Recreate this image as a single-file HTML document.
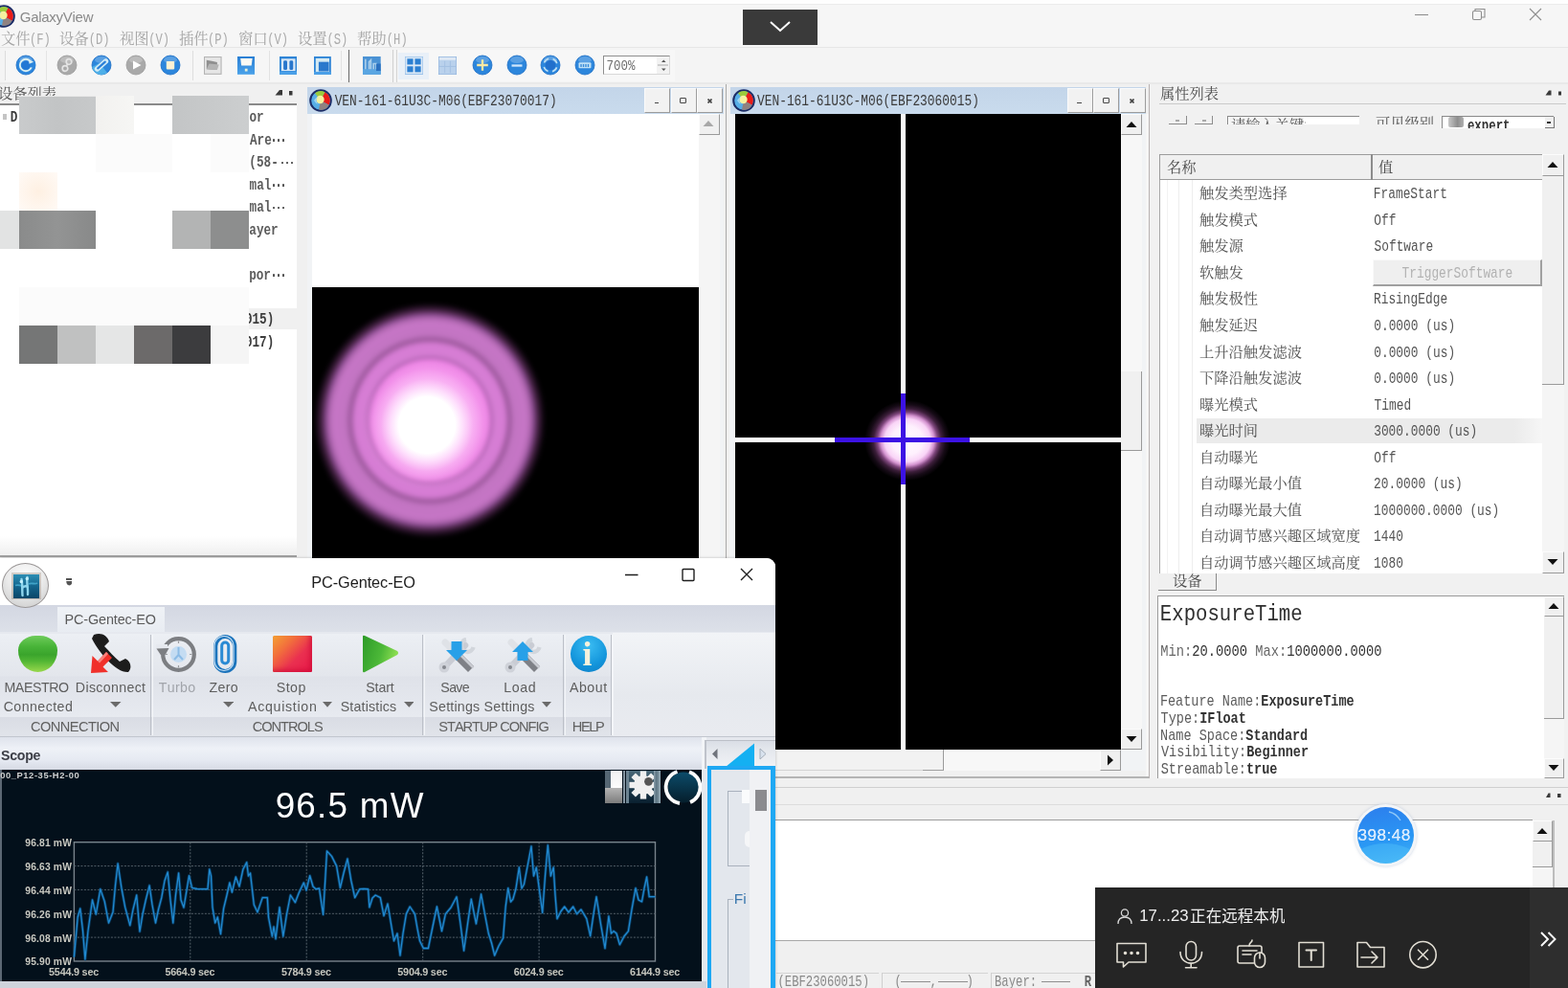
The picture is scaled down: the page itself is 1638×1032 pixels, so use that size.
<!DOCTYPE html>
<html><head><meta charset="utf-8"><title>GalaxyView</title>
<style>
html,body{margin:0;padding:0;}
body{width:1638px;height:1032px;overflow:hidden;position:relative;background:#f0f0f0;font-family:"Liberation Sans",sans-serif;}
div,svg{position:absolute;}
#root{left:0;top:0;width:1638px;height:1032px;overflow:hidden;filter:blur(0.5px);will-change:transform;}
svg text{font-family:"Liberation Serif","Noto Serif CJK SC",serif;font-size:1000px;}
svg text.sans{font-family:"Liberation Sans","Noto Sans CJK SC",sans-serif;}
</style></head><body>
<div id="root">
<div style="left:0px;top:0px;width:1638px;height:50px;background:#f6f6f6;"></div>
<div style="left:0px;top:0px;width:1638px;height:3.5px;background:#fefefe;"></div>
<div style="left:0px;top:3.5px;width:1638px;height:1px;background:#ebebeb;"></div>
<div style="left:0px;top:49px;width:1638px;height:1px;background:#e6e6e6;"></div>
<div style="left:0px;top:50px;width:1638px;height:38px;background:#f4f4f4;"></div>
<div style="left:5px;top:52px;width:196px;height:33px;background:#f6f6f6;"></div>
<div style="left:201px;top:52px;width:162px;height:33px;background:#f6f6f6;"></div>
<div style="left:415px;top:52px;width:290px;height:33px;background:#f7f7f7;"></div>
<div style="left:0px;top:86px;width:1638px;height:2px;background:#e9e9e9;"></div>
<svg style="left:-8px;top:5px" width="24" height="24" viewBox="-12 -12 24 24"><circle r="11.8" fill="#1b2c66"/><circle r="9.8" fill="#58aee6"/><path d="M0 0 L-6 -7.7 A9.8 9.8 0 0 1 4.5 -8.7 Z" fill="#9bcb3c"/><path d="M0 0 L4.5 -8.7 A9.8 9.8 0 0 1 8.6 4.7 Z" fill="#ea1c18"/><path d="M0 0 L8.6 4.7 A9.8 9.8 0 0 1 -2 9.6 Z" fill="#8f8280"/><circle cx="-0.5" cy="-1" r="4.2" fill="#f5f1a0"/><path d="M-3 -3.5 A4.5 4.5 0 0 0 -2 4 A7 7 0 0 1 -7 0 A6 6 0 0 1 -3 -3.500 Z" fill="#9fd4f2"/></svg>
<div style="left:20.75px;top:9.96px;font:15px/1 'Liberation Sans',sans-serif;color:#8a8a8a;white-space:pre;font-kerning:none;letter-spacing:-0.275px;">GalaxyView</div>
<svg width="30.8" height="18.5" viewBox="0 0 2000 1200" fill="#a4a4a4" style="left:0.5px;top:32.3px;opacity:1.0"><text x="0" y="880">文件</text></svg>
<div style="left:30.90px;top:35.97px;font:12.16px/1 'Liberation Mono',monospace;color:#acacac;white-space:pre;transform:scaleY(1.373);transform-origin:0 50%;">(F)</div>
<svg width="30.8" height="18.5" viewBox="0 0 2000 1200" fill="#a4a4a4" style="left:62.3px;top:32.3px;opacity:1.0"><text x="0" y="880">设备</text></svg>
<div style="left:92.70px;top:35.97px;font:12.16px/1 'Liberation Mono',monospace;color:#acacac;white-space:pre;transform:scaleY(1.373);transform-origin:0 50%;">(D)</div>
<svg width="30.8" height="18.5" viewBox="0 0 2000 1200" fill="#a4a4a4" style="left:124.8px;top:32.3px;opacity:1.0"><text x="0" y="880">视图</text></svg>
<div style="left:155.20px;top:35.97px;font:12.16px/1 'Liberation Mono',monospace;color:#acacac;white-space:pre;transform:scaleY(1.373);transform-origin:0 50%;">(V)</div>
<svg width="30.8" height="18.5" viewBox="0 0 2000 1200" fill="#a4a4a4" style="left:186.6px;top:32.3px;opacity:1.0"><text x="0" y="880">插件</text></svg>
<div style="left:217.00px;top:35.97px;font:12.16px/1 'Liberation Mono',monospace;color:#acacac;white-space:pre;transform:scaleY(1.373);transform-origin:0 50%;">(P)</div>
<svg width="30.8" height="18.5" viewBox="0 0 2000 1200" fill="#a4a4a4" style="left:248.8px;top:32.3px;opacity:1.0"><text x="0" y="880">窗口</text></svg>
<div style="left:279.20px;top:35.97px;font:12.16px/1 'Liberation Mono',monospace;color:#acacac;white-space:pre;transform:scaleY(1.373);transform-origin:0 50%;">(V)</div>
<svg width="30.8" height="18.5" viewBox="0 0 2000 1200" fill="#a4a4a4" style="left:311.0px;top:32.3px;opacity:1.0"><text x="0" y="880">设置</text></svg>
<div style="left:341.40px;top:35.97px;font:12.16px/1 'Liberation Mono',monospace;color:#acacac;white-space:pre;transform:scaleY(1.373);transform-origin:0 50%;">(S)</div>
<svg width="30.8" height="18.5" viewBox="0 0 2000 1200" fill="#a4a4a4" style="left:373.4px;top:32.3px;opacity:1.0"><text x="0" y="880">帮助</text></svg>
<div style="left:403.80px;top:35.97px;font:12.16px/1 'Liberation Mono',monospace;color:#acacac;white-space:pre;transform:scaleY(1.373);transform-origin:0 50%;">(H)</div>
<div style="left:776px;top:10px;width:78px;height:37px;background:#3a3a3a;"></div>
<svg style="left:803px;top:21px" width="24" height="14" viewBox="0 0 24 14" fill="none" stroke="#fff" stroke-width="2"><path d="M2 2 L12 11 L22 2"/></svg>
<svg style="left:1470px;top:4px" width="150" height="24" viewBox="0 0 150 24" fill="none" stroke="#8e8e8e" stroke-width="1.1"><path d="M8 11.5 H22"/><rect x="68.5" y="7.5" width="9" height="9" rx="1.5"/><path d="M71 7 V5.5 H81 V14 H78"/><path d="M128 5 L140 17 M140 5 L128 17"/></svg>
<svg style="left:16px;top:57px" width="22" height="22" viewBox="-11 -11 22 22"><circle r="10" fill="#2c86dc" stroke="#1b6cc4" stroke-width="0.8"/><ellipse cx="0" cy="-5.5" rx="7" ry="3.6" fill="#fff" opacity=".22"/><circle r="6.2" fill="none" stroke="#dcf0f2" stroke-width="1.9"/><path d="M3 -3 L10 -3 L10 3 L3 2 Z" fill="#2c86dc"/><circle r="4.6" fill="#2278d4"/><path d="M3 -6 L8.2 -3.2 L3.500 -1.200 Z" fill="#dcf0f2"/></svg>
<svg style="left:59px;top:57px" width="22" height="22" viewBox="-11 -11 22 22"><circle r="10" fill="#a9a9a9" stroke="#9a9a9a" stroke-width="0.8"/><ellipse cx="0" cy="-5.5" rx="7" ry="3.6" fill="#fff" opacity=".22"/><circle cx="-2" cy="3.500" r="2.800" fill="none" stroke="#e4e4e4" stroke-width="1.7"/><circle cx="2" cy="-3.500" r="2.800" fill="none" stroke="#e4e4e4" stroke-width="1.7"/><path d="M-1 1.500 L1 -1.500" stroke="#e4e4e4" stroke-width="1.6"/></svg>
<svg style="left:95.4px;top:57px" width="22" height="22" viewBox="-11 -11 22 22"><circle r="10" fill="#2c86dc" stroke="#1b6cc4" stroke-width="0.8"/><ellipse cx="0" cy="-5.5" rx="7" ry="3.6" fill="#fff" opacity=".22"/><path d="M-10 2 A10 10 0 0 0 6 8 L-2 -2 Z" fill="#5cc0ec" opacity=".7"/><path d="M-4.500 4 L4.500 -4" stroke="#d4ecf6" stroke-width="5.4" stroke-linecap="round"/><path d="M-3.800 3.300 L3.800 -3.300" stroke="#2c80d8" stroke-width="2.2" stroke-linecap="round"/></svg>
<svg style="left:131px;top:57px" width="22" height="22" viewBox="-11 -11 22 22"><circle r="10" fill="#a9a9a9" stroke="#9a9a9a" stroke-width="0.8"/><ellipse cx="0" cy="-5.5" rx="7" ry="3.6" fill="#fff" opacity=".22"/><path d="M-3 -4.5 L5.5 0 L-3 4.5 Z" fill="#fff"/></svg>
<svg style="left:167.3px;top:57px" width="22" height="22" viewBox="-11 -11 22 22"><circle r="10" fill="#2c86dc" stroke="#1b6cc4" stroke-width="0.8"/><ellipse cx="0" cy="-5.5" rx="7" ry="3.6" fill="#fff" opacity=".22"/><rect x="-4.2" y="-4" width="8.4" height="8.4" rx="0.8" fill="#fdf1d4"/></svg>
<svg style="left:492.7px;top:57.3px" width="22" height="22" viewBox="-11 -11 22 22"><circle r="10" fill="#2c86dc" stroke="#1b6cc4" stroke-width="0.8"/><ellipse cx="0" cy="-5.5" rx="7" ry="3.6" fill="#fff" opacity=".22"/><path d="M-5.8 0 H5.8 M0 -5.800 V5.800" stroke="#fbe9a4" stroke-width="2.3"/></svg>
<svg style="left:528.5px;top:57.3px" width="22" height="22" viewBox="-11 -11 22 22"><circle r="10" fill="#2c86dc" stroke="#1b6cc4" stroke-width="0.8"/><ellipse cx="0" cy="-5.5" rx="7" ry="3.6" fill="#fff" opacity=".22"/><path d="M-5.5 0.500 H5.5" stroke="#cfe6fb" stroke-width="2.3"/></svg>
<svg style="left:564.4px;top:57.3px" width="22" height="22" viewBox="-11 -11 22 22"><circle r="10" fill="#2c86dc" stroke="#1b6cc4" stroke-width="0.8"/><ellipse cx="0" cy="-5.5" rx="7" ry="3.6" fill="#fff" opacity=".22"/><circle r="7" fill="none" stroke="#bfe0f4" stroke-width="1.600" stroke-dasharray="6.5 4.500" transform="rotate(20)"/><circle r="5.300" fill="#2270cc"/></svg>
<svg style="left:600.3px;top:57.3px" width="22" height="22" viewBox="-11 -11 22 22"><circle r="10" fill="#2c86dc" stroke="#1b6cc4" stroke-width="0.8"/><ellipse cx="0" cy="-5.5" rx="7" ry="3.6" fill="#fff" opacity=".22"/><rect x="-6.5" y="-2.800" width="13" height="6" rx="1" fill="#bfe0f6"/><path d="M-4 -1 V2 M-1.500 -1 V2 M1 -1 V2 M3.500 -1 V2" stroke="#3a8ad8" stroke-width="1.400"/></svg>
<svg style="left:213px;top:59px" width="18.5" height="18.8" viewBox="0 0 20 20" preserveAspectRatio="none"><rect x="0.500" y="0.500" width="19" height="19" fill="#e6e6e6" stroke="#b4b4b4" stroke-width="1.200"/><path d="M3 4 L9 5 L15 6.500 V15 L3 14 Z" fill="#8f8f8f"/><path d="M3 14 L6 8 L17 9 L15 15 Z" fill="#b4b4b4"/></svg>
<svg style="left:248px;top:59px" width="18.4" height="18.8" viewBox="0 0 20 20" preserveAspectRatio="none"><defs><linearGradient id="gsv" x1="0" y1="0" x2="0" y2="1"><stop offset="0" stop-color="#2a7fd4"/><stop offset="1" stop-color="#4aa2ea"/></linearGradient></defs><rect width="20" height="20" fill="url(#gsv)"/><path d="M3.500 2 H17 L16 10 H4.500 Z" fill="#fbfaf4"/><rect x="8.500" y="13.500" width="3" height="3" fill="#e8f0d8"/></svg>
<svg style="left:292px;top:59px" width="18.4" height="18.8" viewBox="0 0 20 20" preserveAspectRatio="none"><rect width="20" height="20" fill="#2e84d6"/><rect x="2" y="2.500" width="16" height="13.500" fill="#d9e8f6"/><rect x="4.500" y="4.500" width="4.200" height="10.500" rx="1.500" fill="#2876cc"/><rect x="11.300" y="4.500" width="4.200" height="10.500" rx="1.500" fill="#2876cc"/><rect x="0" y="16.500" width="20" height="3.500" fill="#4aa0e8"/></svg>
<svg style="left:328px;top:59px" width="17.8" height="18.8" viewBox="0 0 20 20" preserveAspectRatio="none"><rect width="20" height="20" fill="#2e84d6"/><rect x="2" y="2" width="16" height="15" fill="#d6eaf2"/><rect x="5.500" y="6" width="12" height="10.500" fill="#2a78cc"/><rect x="0" y="17" width="20" height="3" fill="#4aa0e8"/></svg>
<svg style="left:379px;top:59px" width="18.7" height="18.8" viewBox="0 0 20 20" preserveAspectRatio="none"><rect width="20" height="20" fill="#4a92d4"/><rect x="0" y="14" width="20" height="6" fill="#5aa6e2"/><path d="M3 14 V3 M7 14 V6 L9 4 V14 M12 14 V8 H15 V14" stroke="#a8cdea" stroke-width="1.800" fill="none"/><rect x="15" y="8" width="5" height="8" fill="#2a70c0"/></svg>
<div style="left:416px;top:55px;width:32px;height:28px;background:#e9f0f8;"></div>
<svg style="left:423px;top:59.3px" width="19" height="18.7" viewBox="0 0 20 20" preserveAspectRatio="none"><rect width="20" height="20" fill="#dce9f6" stroke="#9cc2ea" stroke-width="1.500"/><rect x="2.500" y="2.500" width="6.500" height="6.500" fill="#2b7fd2"/><rect x="11" y="2.500" width="6.500" height="6.500" fill="#2b7fd2"/><rect x="2.500" y="11" width="6.500" height="6.500" fill="#2b7fd2"/><rect x="11" y="11" width="6.500" height="6.500" fill="#2b7fd2"/></svg>
<svg style="left:458.4px;top:59px" width="19" height="19" viewBox="0 0 20 20" preserveAspectRatio="none"><rect width="20" height="20" fill="#b9d1ec" stroke="#8fb2dc" stroke-width="1.200"/><rect x="1" y="1" width="18" height="3" fill="#dfe9f4"/><path d="M7 5 V18 M13 5 V18 M1 11 H19" stroke="#a3c0e2" stroke-width="1"/></svg>
<div style="left:48px;top:53px;width:1px;height:31px;background:#e4e4e4;"></div>
<div style="left:201px;top:53px;width:1px;height:31px;background:#dedede;"></div>
<div style="left:280.5px;top:53px;width:1px;height:31px;background:#e2e2e2;"></div>
<div style="left:355.8px;top:53px;width:1px;height:31px;background:#e2e2e2;"></div>
<div style="left:5px;top:53px;width:1px;height:31px;background:#dcdcdc;"></div>
<div style="left:363.5px;top:52px;width:1.5px;height:34px;background:#6a6a6a;"></div>
<div style="left:410px;top:52px;width:1px;height:34px;background:#d0d0d0;"></div>
<div style="left:414px;top:52px;width:1px;height:34px;background:#d4d4d4;"></div>
<div style="left:630px;top:58px;width:70px;height:20px;background:#fff;border:1px solid #8e8e8e;border-right-color:#d8d8d8;border-bottom-color:#d8d8d8;box-sizing:border-box;"></div>
<div style="left:633.54px;top:64.14px;font:12.50px/1 'Liberation Mono',monospace;color:#6e6e6e;white-space:pre;transform:scaleY(1.130);transform-origin:0 50%;">700%</div>
<div style="left:686px;top:59px;width:13px;height:18px;background:#f2f2f2;"></div>
<svg style="left:686px;top:59px" width="13" height="18" viewBox="0 0 13 18" fill="#555"><path d="M5 6 L7.300 3.500 L9.600 6 Z M5 12.500 L7.300 15 L9.600 12.500 Z"/><path d="M1 9 H12" stroke="#aaa" stroke-width="1"/></svg>
<div style="left:0px;top:88px;width:311px;height:21px;background:#f0f0f0;"></div>
<svg width="61.2" height="18.4" viewBox="0 0 4000 1200" fill="#555" style="left:-2.0px;top:90.0px;opacity:1.0"><text x="0" y="880">设备列表</text></svg>
<div style="left:0px;top:108px;width:311px;height:2px;background:#8a8a8a;"></div>
<div style="left:0px;top:110px;width:310px;height:468px;background:#fff;"></div>
<div style="left:310px;top:88px;width:11px;height:495px;background:#f0f0f0;"></div>
<div style="left:0px;top:560px;width:310px;height:19.5px;background:linear-gradient(#fff,#efefef);"></div>
<div style="left:0px;top:579.5px;width:310px;height:2px;background:#a0a0a0;"></div>
<svg style="left:285px;top:91px" width="24" height="12" viewBox="0 0 24 12" fill="#3a3a3a"><path d="M2.500 8.500 L7 3 L10 3 L10 8.500 Z"/><rect x="17" y="4" width="3.500" height="4.500"/></svg>
<div style="left:260.43px;top:117.38px;font:bold 12.66px/1 'Liberation Mono',monospace;color:#5c5c5c;white-space:pre;transform:scaleY(1.259);transform-origin:0 50%;">or</div>
<div style="left:261.00px;top:140.88px;font:bold 12.66px/1 'Liberation Mono',monospace;color:#5c5c5c;white-space:pre;transform:scaleY(1.259);transform-origin:0 50%;">Are</div>
<div style="left:285.0px;top:145.39999999999998px;width:2.4px;height:2.4px;background:#555;border-radius:0.600px"></div>
<div style="left:289.8px;top:145.39999999999998px;width:2.4px;height:2.4px;background:#555;border-radius:0.600px"></div>
<div style="left:294.6px;top:145.39999999999998px;width:2.4px;height:2.4px;background:#555;border-radius:0.600px"></div>
<div style="left:260.37px;top:164.38px;font:bold 12.66px/1 'Liberation Mono',monospace;color:#5c5c5c;white-space:pre;transform:scaleY(1.259);transform-origin:0 50%;">(58-</div>
<div style="left:294.09999999999997px;top:168.89999999999998px;width:2.4px;height:2.4px;background:#555;border-radius:0.600px"></div>
<div style="left:298.9px;top:168.89999999999998px;width:2.4px;height:2.4px;background:#555;border-radius:0.600px"></div>
<div style="left:303.7px;top:168.89999999999998px;width:2.4px;height:2.4px;background:#555;border-radius:0.600px"></div>
<div style="left:260.57px;top:187.88px;font:bold 12.66px/1 'Liberation Mono',monospace;color:#5c5c5c;white-space:pre;transform:scaleY(1.259);transform-origin:0 50%;">mal</div>
<div style="left:285.0px;top:192.39999999999998px;width:2.4px;height:2.4px;background:#555;border-radius:0.600px"></div>
<div style="left:289.8px;top:192.39999999999998px;width:2.4px;height:2.4px;background:#555;border-radius:0.600px"></div>
<div style="left:294.6px;top:192.39999999999998px;width:2.4px;height:2.4px;background:#555;border-radius:0.600px"></div>
<div style="left:260.57px;top:211.38px;font:bold 12.66px/1 'Liberation Mono',monospace;color:#5c5c5c;white-space:pre;transform:scaleY(1.259);transform-origin:0 50%;">mal</div>
<div style="left:285.0px;top:215.89999999999998px;width:2.4px;height:2.4px;background:#555;border-radius:0.600px"></div>
<div style="left:289.8px;top:215.89999999999998px;width:2.4px;height:2.4px;background:#555;border-radius:0.600px"></div>
<div style="left:294.6px;top:215.89999999999998px;width:2.4px;height:2.4px;background:#555;border-radius:0.600px"></div>
<div style="left:260.34px;top:234.88px;font:bold 12.66px/1 'Liberation Mono',monospace;color:#5c5c5c;white-space:pre;transform:scaleY(1.259);transform-origin:0 50%;">ayer</div>
<div style="left:260.13px;top:281.88px;font:bold 12.66px/1 'Liberation Mono',monospace;color:#5c5c5c;white-space:pre;transform:scaleY(1.259);transform-origin:0 50%;">por</div>
<div style="left:285.0px;top:286.4px;width:2.4px;height:2.4px;background:#555;border-radius:0.600px"></div>
<div style="left:289.8px;top:286.4px;width:2.4px;height:2.4px;background:#555;border-radius:0.600px"></div>
<div style="left:294.6px;top:286.4px;width:2.4px;height:2.4px;background:#555;border-radius:0.600px"></div>
<div style="left:3px;top:119px;width:4px;height:6px;background:#c4c4c4;"></div>
<div style="left:10.67px;top:116.88px;font:bold 12.66px/1 'Liberation Mono',monospace;color:#3c3c3c;white-space:pre;transform:scaleY(1.259);transform-origin:0 50%;">D</div>
<div style="left:256px;top:322px;width:54px;height:22px;background:#f0f0f0;"></div>
<div style="left:255.88px;top:328.28px;font:bold 12.66px/1 'Liberation Mono',monospace;color:#3c3c3c;white-space:pre;transform:scaleY(1.259);transform-origin:0 50%;">015)</div>
<div style="left:255.88px;top:351.58px;font:bold 12.66px/1 'Liberation Mono',monospace;color:#3c3c3c;white-space:pre;transform:scaleY(1.259);transform-origin:0 50%;">017)</div>
<div style="left:100px;top:100px;width:40px;height:40px;background:linear-gradient(90deg,#f2f1ef,#f6f6f4);"></div>
<div style="left:20px;top:100px;width:80px;height:40px;background:linear-gradient(90deg,#c9cbcc,#c2c4c5 50%,#c7c9ca);"></div>
<div style="left:180px;top:100px;width:80px;height:40px;background:linear-gradient(90deg,#c3c5c6,#cccecf);"></div>
<div style="left:0px;top:220px;width:20px;height:40px;background:#e2e3e3;"></div>
<div style="left:20px;top:220px;width:80px;height:40px;background:linear-gradient(90deg,#8a8b8b,#939494 50%,#888989);"></div>
<div style="left:180px;top:220px;width:40px;height:40px;background:#b3b4b4;"></div>
<div style="left:220px;top:220px;width:40px;height:40px;background:#8d8e8e;"></div>
<div style="left:20px;top:180px;width:40px;height:40px;background:radial-gradient(#fef0e2,#fffaf6);"></div>
<div style="left:20px;top:340px;width:40px;height:40px;background:#757676;"></div>
<div style="left:60px;top:340px;width:40px;height:40px;background:#c0c1c1;"></div>
<div style="left:100px;top:340px;width:40px;height:40px;background:#e5e6e6;"></div>
<div style="left:140px;top:340px;width:40px;height:40px;background:#6c6a6a;"></div>
<div style="left:180px;top:340px;width:40px;height:40px;background:#3c3c3e;"></div>
<div style="left:220px;top:340px;width:40px;height:40px;background:#f5f5f5;"></div>
<div style="left:250px;top:322px;width:10px;height:18px;background:#fbfbfb;"></div>
<div style="left:100px;top:140px;width:80px;height:40px;background:#fbfbfb;"></div>
<div style="left:220px;top:140px;width:40px;height:40px;background:#fbfbfb;"></div>
<div style="left:20px;top:300px;width:200px;height:40px;background:#fbfbfb;"></div>
<div style="left:220px;top:300px;width:40px;height:40px;background:#fbfbfb;"></div>
<div style="left:20px;top:100px;width:80px;height:0.8px;background:#e8e8e8;"></div>
<div style="left:321px;top:88px;width:879px;height:735px;background:#f0f0f0;"></div>
<div style="left:321px;top:91px;width:435px;height:28px;background:linear-gradient(#c3d5e9,#c9dbed);"></div>
<svg style="left:322.7px;top:92.8px" width="24" height="24" viewBox="-12 -12 24 24"><circle r="11.8" fill="#1b2c66"/><circle r="9.8" fill="#58aee6"/><path d="M0 0 L-6 -7.7 A9.8 9.8 0 0 1 4.5 -8.7 Z" fill="#9bcb3c"/><path d="M0 0 L4.5 -8.7 A9.8 9.8 0 0 1 8.6 4.7 Z" fill="#ea1c18"/><path d="M0 0 L8.6 4.7 A9.8 9.8 0 0 1 -2 9.6 Z" fill="#8f8280"/><circle cx="-0.5" cy="-1" r="4.2" fill="#f5f1a0"/><path d="M-3 -3.5 A4.5 4.5 0 0 0 -2 4 A7 7 0 0 1 -7 0 A6 6 0 0 1 -3 -3.500 Z" fill="#9fd4f2"/></svg>
<div style="left:349.64px;top:99.89px;font:12.90px/1 'Liberation Mono',monospace;color:#3c3c3c;white-space:pre;transform:scaleY(1.271);transform-origin:0 50%;">VEN-161-61U3C-M06(EBF23070017)</div>
<div style="left:673.2px;top:92px;width:27px;height:25.5px;background:#f2f2f2;border:1px solid #fbfbfb;border-right:1.500px solid #9c9c9c;border-bottom:1.500px solid #9c9c9c;box-sizing:border-box;"></div>
<div style="left:683.7px;top:106.5px;width:4.5px;height:1.8px;background:#484848;"></div>
<div style="left:700.7px;top:92px;width:27px;height:25.5px;background:#f2f2f2;border:1px solid #fbfbfb;border-right:1.500px solid #9c9c9c;border-bottom:1.500px solid #9c9c9c;box-sizing:border-box;"></div>
<div style="left:710.2px;top:101.5px;width:7px;height:6.3px;border:1.300px solid #484848;border-top-width:1.800px;box-sizing:border-box;border-radius:1px"></div>
<div style="left:728.2px;top:92px;width:27px;height:25.5px;background:#f2f2f2;border:1px solid #fbfbfb;border-right:1.500px solid #9c9c9c;border-bottom:1.500px solid #9c9c9c;box-sizing:border-box;"></div>
<svg style="left:738.7px;top:102.5px" width="5" height="5" viewBox="0 0 5 5" stroke="#484848" stroke-width="1.700"><path d="M0.500 0.500 L4.500 4.500 M4.500 0.500 L0.500 4.500"/></svg>
<div style="left:763px;top:91px;width:433.5px;height:28px;background:linear-gradient(#c3d5e9,#c9dbed);"></div>
<svg style="left:764.7px;top:92.8px" width="24" height="24" viewBox="-12 -12 24 24"><circle r="11.8" fill="#1b2c66"/><circle r="9.8" fill="#58aee6"/><path d="M0 0 L-6 -7.7 A9.8 9.8 0 0 1 4.5 -8.7 Z" fill="#9bcb3c"/><path d="M0 0 L4.5 -8.7 A9.8 9.8 0 0 1 8.6 4.7 Z" fill="#ea1c18"/><path d="M0 0 L8.6 4.7 A9.8 9.8 0 0 1 -2 9.6 Z" fill="#8f8280"/><circle cx="-0.5" cy="-1" r="4.2" fill="#f5f1a0"/><path d="M-3 -3.5 A4.5 4.5 0 0 0 -2 4 A7 7 0 0 1 -7 0 A6 6 0 0 1 -3 -3.500 Z" fill="#9fd4f2"/></svg>
<div style="left:790.94px;top:99.89px;font:12.90px/1 'Liberation Mono',monospace;color:#3c3c3c;white-space:pre;transform:scaleY(1.271);transform-origin:0 50%;">VEN-161-61U3C-M06(EBF23060015)</div>
<div style="left:1114.5px;top:92px;width:27px;height:25.5px;background:#f2f2f2;border:1px solid #fbfbfb;border-right:1.500px solid #9c9c9c;border-bottom:1.500px solid #9c9c9c;box-sizing:border-box;"></div>
<div style="left:1125.0px;top:106.5px;width:4.5px;height:1.8px;background:#484848;"></div>
<div style="left:1142.0px;top:92px;width:27px;height:25.5px;background:#f2f2f2;border:1px solid #fbfbfb;border-right:1.500px solid #9c9c9c;border-bottom:1.500px solid #9c9c9c;box-sizing:border-box;"></div>
<div style="left:1151.5px;top:101.5px;width:7px;height:6.3px;border:1.300px solid #484848;border-top-width:1.800px;box-sizing:border-box;border-radius:1px"></div>
<div style="left:1169.5px;top:92px;width:27px;height:25.5px;background:#f2f2f2;border:1px solid #fbfbfb;border-right:1.500px solid #9c9c9c;border-bottom:1.500px solid #9c9c9c;box-sizing:border-box;"></div>
<svg style="left:1180.0px;top:102.5px" width="5" height="5" viewBox="0 0 5 5" stroke="#484848" stroke-width="1.700"><path d="M0.500 0.500 L4.500 4.500 M4.500 0.500 L0.500 4.500"/></svg>
<div style="left:321px;top:119px;width:435px;height:464px;background:#f1f3f5;"></div>
<div style="left:326px;top:119px;width:404px;height:182px;background:#fff;"></div>
<div style="left:730px;top:119px;width:22px;height:464px;background:#f5f5f5;"></div>
<div style="left:729.5px;top:119px;width:22.5px;height:21.5px;background:#f0f0f0;border:1px solid #fcfcfc;border-right-color:#9a9a9a;border-bottom-color:#9a9a9a;box-sizing:border-box;"></div>
<svg style="left:733.25px;top:122.25px" width="14" height="14" viewBox="-7 -7 14 14" fill="#a8a8a8"><path d="M-5.500 3 L0 -3 L5.500 3 Z"/></svg>
<div style="left:326px;top:300px;width:404px;height:283px;overflow:hidden;background:#000"><div style="left:1.500px;top:15.500px;width:242px;height:246px;border-radius:50%;background:radial-gradient(closest-side,#f9acf3 0,#f6a0ef 33.600%,#f290ea 43%,#ec84e4 50.400%,#b868b8 53.100%,#d67ed4 56.500%,#d67cd4 64.500%,#9c589c 68.600%,#c274c2 72.800%,#c676c6 82.800%,#b268b2 86.700%,#84488a 89.800%,#4c264a 93%,#200e20 96.500%,#000 100%);filter:blur(2.200px)"></div><div style="left:52.500px;top:77px;width:134px;height:134px;border-radius:50%;background:radial-gradient(closest-side,#fff 0,#fff 44%,rgba(255,232,254,.88) 56%,rgba(252,196,248,.5) 72%,rgba(249,168,242,.18) 88%,rgba(248,160,240,0) 100%)"></div></div>
<div style="left:762px;top:119px;width:435px;height:686px;background:#f1f3f5;"></div>
<div style="left:768px;top:119px;width:403px;height:664px;background:#000;"></div>
<div style="left:902.500px;top:418px;width:90px;height:84px;border-radius:50%;background:radial-gradient(closest-side,#fffaff 0,#fef0fd 36%,#f9d4f7 53%,#d494d0 62%,#7e467c 70%,#3c1e3a 79%,#170b17 89%,#000 100%)"></div>
<div style="left:941px;top:119px;width:5px;height:664px;background:#fafafa;"></div>
<div style="left:768px;top:457px;width:403px;height:5px;background:#fafafa;"></div>
<div style="left:872px;top:457.3px;width:141px;height:4.4px;background:#3c12e4;"></div>
<div style="left:941.3px;top:411px;width:4.4px;height:95px;background:#3c12e4;"></div>
<div style="left:1171px;top:119px;width:22px;height:664px;background:#f7f7f7;"></div>
<div style="left:1171px;top:119px;width:22px;height:22px;background:#f0f0f0;border:1px solid #fcfcfc;border-right-color:#9a9a9a;border-bottom-color:#9a9a9a;box-sizing:border-box;"></div>
<svg style="left:1174.5px;top:122.5px" width="14" height="14" viewBox="-7 -7 14 14" fill="#111"><path d="M-5.500 3 L0 -3 L5.500 3 Z"/></svg>
<div style="left:1171px;top:761px;width:22px;height:22px;background:#f0f0f0;border:1px solid #fcfcfc;border-right-color:#9a9a9a;border-bottom-color:#9a9a9a;box-sizing:border-box;"></div>
<svg style="left:1174.5px;top:764.5px" width="14" height="14" viewBox="-7 -7 14 14" fill="#111"><path d="M-5.500 -3 L0 3 L5.500 -3 Z"/></svg>
<div style="left:1171px;top:388px;width:22px;height:83px;background:#f0f0f0;border-right:1px solid #9a9a9a;border-bottom:1px solid #9a9a9a;box-sizing:border-box;"></div>
<div style="left:768px;top:783px;width:403px;height:22px;background:#f7f7f7;"></div>
<div style="left:1149px;top:783px;width:22px;height:22px;background:#f0f0f0;border:1px solid #fcfcfc;border-right-color:#9a9a9a;border-bottom-color:#9a9a9a;box-sizing:border-box;"></div>
<svg style="left:1152.5px;top:786.5px" width="14" height="14" viewBox="-7 -7 14 14" fill="#111"><path d="M-3 -5.500 L3 0 L-3 5.500 Z"/></svg>
<div style="left:768px;top:783px;width:218px;height:22px;background:#f2f2f2;border-right:1px solid #9a9a9a;border-bottom:1px solid #d4d4d4;box-sizing:border-box;"></div>
<div style="left:964px;top:804px;width:22px;height:1px;background:#a0a0a0;"></div>
<div style="left:757.8px;top:88px;width:1.5px;height:720px;background:#a9a9a9;"></div>
<div style="left:1197px;top:119px;width:3px;height:700px;background:#f6f6f6;"></div>
<div style="left:1200px;top:88px;width:1.2px;height:735px;background:#b8b2b2;"></div>
<div style="left:810px;top:811px;width:390px;height:1.5px;background:#b4b4b4;"></div>
<div style="left:1201px;top:88px;width:437px;height:735px;background:#f1f1f1;"></div>
<svg width="61.2" height="18.4" viewBox="0 0 4000 1200" fill="#4c4c4c" style="left:1211.6px;top:90.1px;opacity:1.0"><text x="0" y="880">属性列表</text></svg>
<div style="left:1211px;top:108px;width:425px;height:1.3px;background:#cacaca;"></div>
<svg style="left:1611px;top:91px" width="24" height="12" viewBox="0 0 24 12" fill="#3a3a3a"><path d="M3.500 8.500 L7 3.500 L9.500 3.500 L9.500 8.500 Z"/><rect x="17" y="4.500" width="3" height="4"/></svg>
<div style="left:1221px;top:121px;width:18.5px;height:8.599999999999994px;border-bottom:1.3px solid #8c8c8c;border-right:1.3px solid #8c8c8c;box-sizing:border-box;"></div>
<div style="left:1248px;top:121px;width:19.4px;height:8.599999999999994px;border-bottom:1.3px solid #8c8c8c;border-right:1.3px solid #8c8c8c;box-sizing:border-box;"></div>
<div style="left:1228px;top:125px;width:4px;height:2px;background:#aaa;"></div>
<div style="left:1256px;top:125px;width:4px;height:2px;background:#aaa;"></div>
<div style="left:1282px;top:121px;width:138px;height:8.599999999999994px;background:#fff;border-top:1px solid #8a8a8a;border-left:1.3px solid #8a8a8a;box-sizing:border-box;"></div>
<div style="left:1284px;top:122px;width:78px;height:7.599999999999994px;background:#f4f4f4;"></div>
<div style="left:1284px;top:122px;width:80px;height:7.599999999999994px;overflow:hidden"><svg width="91.8" height="18.4" viewBox="0 0 6000 1200" fill="#555" style="left:2.2px;top:0.6px;opacity:1.0"><text x="0" y="880">请输入关键字</text></svg></div>
<div style="left:1436px;top:120px;width:66px;height:9.599999999999994px;overflow:hidden"><svg width="61.2" height="18.4" viewBox="0 0 4000 1200" fill="#555" style="left:1.2px;top:1.0px;opacity:1.0"><text x="0" y="880">可见级别</text></svg></div>
<div style="left:1506.4px;top:120.7px;width:117px;height:13.5px;background:#fff;border-top:1px solid #8a8a8a;border-left:1.3px solid #8a8a8a;box-sizing:border-box;"></div>
<div style="left:1512.6px;top:121.7px;width:16px;height:11.5px;background:linear-gradient(90deg,#c8c8c8,#8e8e8e 60%,#b0b0b0);border-radius:2px"></div>
<div style="left:1530px;top:121px;width:60px;height:12.800px;overflow:hidden">
<div style="left:2.89px;top:5.05px;font:bold 12.41px/1 'Liberation Mono',monospace;color:#333;white-space:pre;transform:scaleY(1.345);transform-origin:0 50%;">expert</div>
</div>
<div style="left:1613.5px;top:121.5px;width:10px;height:12px;background:#f0f0f0;border-right:1.3px solid #777;border-bottom:1.3px solid #777;box-sizing:border-box;"></div>
<div style="left:1616px;top:127px;width:4px;height:2px;background:#333;"></div>
<div style="left:1210.5px;top:161px;width:401px;height:27px;background:#f0f0f0;border:1.3px solid #9c9c9c;box-sizing:border-box;"></div>
<div style="left:1432px;top:161px;width:1.6px;height:27px;background:#8c8c8c;"></div>
<svg width="30.6" height="18.4" viewBox="0 0 2000 1200" fill="#4c4c4c" style="left:1218.6px;top:167.0px;opacity:1.0"><text x="0" y="880">名称</text></svg>
<svg width="15.3" height="18.4" viewBox="0 0 1000 1200" fill="#4c4c4c" style="left:1440.2px;top:167.0px;opacity:1.0"><text x="0" y="880">值</text></svg>
<div style="left:1211px;top:188px;width:400px;height:411px;background:#fff;"></div>
<div style="left:1210.5px;top:188px;width:1.5px;height:411px;background:#a8a8a8;"></div>
<div style="left:1611px;top:161px;width:23.3px;height:438px;background:#f5f5f5;"></div>
<div style="left:1611px;top:161px;width:23.3px;height:22.5px;background:#f0f0f0;border:1px solid #fcfcfc;border-right-color:#9a9a9a;border-bottom-color:#9a9a9a;box-sizing:border-box;"></div>
<svg style="left:1615.15px;top:164.75px" width="14" height="14" viewBox="-7 -7 14 14" fill="#111"><path d="M-5.500 3 L0 -3 L5.500 3 Z"/></svg>
<div style="left:1611px;top:576px;width:23.3px;height:22.5px;background:#f0f0f0;border:1px solid #fcfcfc;border-right-color:#9a9a9a;border-bottom-color:#9a9a9a;box-sizing:border-box;"></div>
<svg style="left:1615.15px;top:579.75px" width="14" height="14" viewBox="-7 -7 14 14" fill="#111"><path d="M-5.500 -3 L0 3 L5.500 -3 Z"/></svg>
<div style="left:1611px;top:183.5px;width:23.3px;height:218px;background:#f0f0f0;border-right:1px solid #9a9a9a;border-bottom:1px solid #9a9a9a;box-sizing:border-box;"></div>
<div style="left:1219px;top:188px;width:1px;height:411px;background:#f2f2f2;"></div>
<div style="left:1231px;top:188px;width:1px;height:411px;background:#eeeeee;"></div>
<div style="left:1245px;top:188px;width:1px;height:411px;background:#eeeeee;"></div>
<svg width="91.8" height="18.4" viewBox="0 0 6000 1200" fill="#505050" style="left:1253.2px;top:194.2px;opacity:1.0"><text x="0" y="880">触发类型选择</text></svg>
<div style="left:1434.78px;top:197.22px;font:12.86px/1 'Liberation Mono',monospace;color:#555;white-space:pre;transform:scaleY(1.298);transform-origin:0 50%;">FrameStart</div>
<svg width="61.2" height="18.4" viewBox="0 0 4000 1200" fill="#505050" style="left:1253.2px;top:221.8px;opacity:1.0"><text x="0" y="880">触发模式</text></svg>
<div style="left:1435.36px;top:224.77px;font:12.86px/1 'Liberation Mono',monospace;color:#555;white-space:pre;transform:scaleY(1.298);transform-origin:0 50%;">Off</div>
<svg width="45.9" height="18.4" viewBox="0 0 3000 1200" fill="#505050" style="left:1253.2px;top:249.3px;opacity:1.0"><text x="0" y="880">触发源</text></svg>
<div style="left:1435.50px;top:252.32px;font:12.86px/1 'Liberation Mono',monospace;color:#555;white-space:pre;transform:scaleY(1.298);transform-origin:0 50%;">Software</div>
<svg width="45.9" height="18.4" viewBox="0 0 3000 1200" fill="#505050" style="left:1253.2px;top:276.9px;opacity:1.0"><text x="0" y="880">软触发</text></svg>
<div style="left:1434px;top:270.75px;width:177px;height:28.6px;background:#efefef;border:1px solid #fafafa;border-right:2px solid #a0a0a0;border-bottom:2px solid #a0a0a0;box-sizing:border-box;"></div>
<div style="left:1464.52px;top:280.47px;font:12.86px/1 'Liberation Mono',monospace;color:#b2b2b2;white-space:pre;transform:scaleY(1.298);transform-origin:0 50%;">TriggerSoftware</div>
<svg width="61.2" height="18.4" viewBox="0 0 4000 1200" fill="#505050" style="left:1253.2px;top:304.4px;opacity:1.0"><text x="0" y="880">触发极性</text></svg>
<div style="left:1434.98px;top:307.42px;font:12.86px/1 'Liberation Mono',monospace;color:#555;white-space:pre;transform:scaleY(1.298);transform-origin:0 50%;">RisingEdge</div>
<svg width="61.2" height="18.4" viewBox="0 0 4000 1200" fill="#505050" style="left:1253.2px;top:332.0px;opacity:1.0"><text x="0" y="880">触发延迟</text></svg>
<div style="left:1435.22px;top:334.97px;font:12.86px/1 'Liberation Mono',monospace;color:#555;white-space:pre;transform:scaleY(1.298);transform-origin:0 50%;">0.0000 (us)</div>
<svg width="107.1" height="18.4" viewBox="0 0 7000 1200" fill="#505050" style="left:1253.2px;top:359.5px;opacity:1.0"><text x="0" y="880">上升沿触发滤波</text></svg>
<div style="left:1435.22px;top:362.52px;font:12.86px/1 'Liberation Mono',monospace;color:#555;white-space:pre;transform:scaleY(1.298);transform-origin:0 50%;">0.0000 (us)</div>
<svg width="107.1" height="18.4" viewBox="0 0 7000 1200" fill="#505050" style="left:1253.2px;top:387.1px;opacity:1.0"><text x="0" y="880">下降沿触发滤波</text></svg>
<div style="left:1435.22px;top:390.07px;font:12.86px/1 'Liberation Mono',monospace;color:#555;white-space:pre;transform:scaleY(1.298);transform-origin:0 50%;">0.0000 (us)</div>
<svg width="61.2" height="18.4" viewBox="0 0 4000 1200" fill="#505050" style="left:1253.2px;top:414.6px;opacity:1.0"><text x="0" y="880">曝光模式</text></svg>
<div style="left:1435.52px;top:417.62px;font:12.86px/1 'Liberation Mono',monospace;color:#555;white-space:pre;transform:scaleY(1.298);transform-origin:0 50%;">Timed</div>
<div style="left:1250px;top:437.35px;width:361px;height:26px;background:linear-gradient(90deg,#ebebeb 0,#ebebeb 92%,#f6f6f6);"></div>
<svg width="61.2" height="18.4" viewBox="0 0 4000 1200" fill="#505050" style="left:1253.2px;top:442.2px;opacity:1.0"><text x="0" y="880">曝光时间</text></svg>
<div style="left:1435.20px;top:445.17px;font:12.86px/1 'Liberation Mono',monospace;color:#555;white-space:pre;transform:scaleY(1.298);transform-origin:0 50%;">3000.0000 (us)</div>
<svg width="61.2" height="18.4" viewBox="0 0 4000 1200" fill="#505050" style="left:1253.2px;top:469.7px;opacity:1.0"><text x="0" y="880">自动曝光</text></svg>
<div style="left:1435.36px;top:472.72px;font:12.86px/1 'Liberation Mono',monospace;color:#555;white-space:pre;transform:scaleY(1.298);transform-origin:0 50%;">Off</div>
<svg width="107.1" height="18.4" viewBox="0 0 7000 1200" fill="#505050" style="left:1253.2px;top:497.3px;opacity:1.0"><text x="0" y="880">自动曝光最小值</text></svg>
<div style="left:1435.10px;top:500.27px;font:12.86px/1 'Liberation Mono',monospace;color:#555;white-space:pre;transform:scaleY(1.298);transform-origin:0 50%;">20.0000 (us)</div>
<svg width="107.1" height="18.4" viewBox="0 0 7000 1200" fill="#505050" style="left:1253.2px;top:524.8px;opacity:1.0"><text x="0" y="880">自动曝光最大值</text></svg>
<div style="left:1435.07px;top:527.82px;font:12.86px/1 'Liberation Mono',monospace;color:#555;white-space:pre;transform:scaleY(1.298);transform-origin:0 50%;">1000000.0000 (us)</div>
<svg width="168.3" height="18.4" viewBox="0 0 11000 1200" fill="#505050" style="left:1253.2px;top:552.4px;opacity:1.0"><text x="0" y="880">自动调节感兴趣区域宽度</text></svg>
<div style="left:1435.07px;top:555.37px;font:12.86px/1 'Liberation Mono',monospace;color:#555;white-space:pre;transform:scaleY(1.298);transform-origin:0 50%;">1440</div>
<svg width="168.3" height="18.4" viewBox="0 0 11000 1200" fill="#505050" style="left:1253.2px;top:579.9px;opacity:1.0"><text x="0" y="880">自动调节感兴趣区域高度</text></svg>
<div style="left:1435.07px;top:582.92px;font:12.86px/1 'Liberation Mono',monospace;color:#555;white-space:pre;transform:scaleY(1.298);transform-origin:0 50%;">1080</div>
<div style="left:1210px;top:599px;width:61px;height:18px;background:#f0f0f0;border-right:1.3px solid #8a8a8a;border-bottom:1.3px solid #8a8a8a;box-sizing:border-box;"></div>
<svg width="30.6" height="18.4" viewBox="0 0 2000 1200" fill="#4c4c4c" style="left:1224.8px;top:599.3px;opacity:1.0"><text x="0" y="880">设备</text></svg>
<div style="left:1209px;top:621.5px;width:425px;height:192px;background:#fff;border:1.3px solid #9a9a9a;border-bottom-color:#e0e0e0;box-sizing:border-box;"></div>
<div style="left:1613px;top:622.5px;width:21px;height:190.5px;background:#f5f5f5;"></div>
<div style="left:1613px;top:622.5px;width:21px;height:21px;background:#f0f0f0;border:1px solid #fcfcfc;border-right-color:#9a9a9a;border-bottom-color:#9a9a9a;box-sizing:border-box;"></div>
<svg style="left:1616.0px;top:625.5px" width="14" height="14" viewBox="-7 -7 14 14" fill="#111"><path d="M-5.500 3 L0 -3 L5.500 3 Z"/></svg>
<div style="left:1613px;top:792px;width:21px;height:21px;background:#f0f0f0;border:1px solid #fcfcfc;border-right-color:#9a9a9a;border-bottom-color:#9a9a9a;box-sizing:border-box;"></div>
<svg style="left:1616.0px;top:795.0px" width="14" height="14" viewBox="-7 -7 14 14" fill="#111"><path d="M-5.500 -3 L0 3 L5.500 -3 Z"/></svg>
<div style="left:1613px;top:643.5px;width:21px;height:107px;background:#f0f0f0;border-right:1px solid #9a9a9a;border-bottom:1px solid #9a9a9a;box-sizing:border-box;"></div>
<div style="left:1211.87px;top:631.60px;font:20.66px/1 'Liberation Mono',monospace;color:#2e2e2e;white-space:pre;transform:scaleY(1.176);transform-origin:0 50%;">ExposureTime</div>
<div style="left:1212.13px;top:673.87px;font:13.78px/1 'Liberation Mono',monospace;color:#333;white-space:pre;transform:scaleY(1.212);transform-origin:0 50%;"><span style="color:#666">Min:</span>20.0000 <span style="color:#666">Max:</span>1000000.0000</div>
<div style="left:1211.90px;top:726.47px;font:bold 13.53px/1 'Liberation Mono',monospace;color:#333;white-space:pre;transform:scaleY(1.212);transform-origin:0 50%;"><span style="color:#5c5c5c;font-weight:normal">Feature Name:</span>ExposureTime</div>
<div style="left:1212.60px;top:744.12px;font:bold 13.53px/1 'Liberation Mono',monospace;color:#333;white-space:pre;transform:scaleY(1.212);transform-origin:0 50%;"><span style="color:#5c5c5c;font-weight:normal">Type:</span>IFloat</div>
<div style="left:1212.11px;top:761.77px;font:bold 13.53px/1 'Liberation Mono',monospace;color:#333;white-space:pre;transform:scaleY(1.212);transform-origin:0 50%;"><span style="color:#5c5c5c;font-weight:normal">Name Space:</span>Standard</div>
<div style="left:1212.98px;top:779.42px;font:bold 13.53px/1 'Liberation Mono',monospace;color:#333;white-space:pre;transform:scaleY(1.212);transform-origin:0 50%;"><span style="color:#5c5c5c;font-weight:normal">Visibility:</span>Beginner</div>
<div style="left:1212.75px;top:797.07px;font:bold 13.53px/1 'Liberation Mono',monospace;color:#333;white-space:pre;transform:scaleY(1.212);transform-origin:0 50%;"><span style="color:#5c5c5c;font-weight:normal">Streamable:</span>true</div>
<div style="left:810px;top:813px;width:828px;height:219px;background:#f0f0f0;"></div>
<div style="left:810px;top:821.5px;width:828px;height:1.3px;background:#cfcfcf;"></div>
<div style="left:810px;top:840px;width:828px;height:1px;background:#dcdcdc;"></div>
<svg style="left:1610px;top:825px" width="24" height="12" viewBox="0 0 24 12" fill="#3a3a3a"><path d="M5 8 L7.500 3.500 L9.500 3.500 L9.500 8 Z"/><rect x="17" y="4" width="3.500" height="4"/></svg>
<div style="left:810px;top:856px;width:791px;height:127px;background:#fff;border-top:1.3px solid #9c9c9c;border-bottom:1.3px solid #a8a8a8;box-sizing:border-box;"></div>
<div style="left:1600.5px;top:857px;width:21.5px;height:125px;background:#f5f5f5;"></div>
<div style="left:1600.5px;top:857px;width:21.5px;height:22px;background:#f0f0f0;border:1px solid #fcfcfc;border-right-color:#9a9a9a;border-bottom-color:#9a9a9a;box-sizing:border-box;"></div>
<svg style="left:1603.75px;top:860.5px" width="14" height="14" viewBox="-7 -7 14 14" fill="#111"><path d="M-5.500 3 L0 -3 L5.500 3 Z"/></svg>
<div style="left:1600.5px;top:879px;width:21.5px;height:27px;background:#f0f0f0;border-right:1px solid #9a9a9a;border-bottom:1px solid #9a9a9a;box-sizing:border-box;"></div>
<div style="left:1622px;top:857px;width:1.5px;height:125px;background:#bdbdbd;"></div>
<div style="left:812.45px;top:1019.88px;font:12.25px/1 'Liberation Mono',monospace;color:#8a8a8a;white-space:pre;transform:scaleY(1.301);transform-origin:0 50%;">(EBF23060015)</div>
<div style="left:934.45px;top:1019.88px;font:12.25px/1 'Liberation Mono',monospace;color:#8a8a8a;white-space:pre;transform:scaleY(1.301);transform-origin:0 50%;">(</div>
<div style="left:1009.49px;top:1019.88px;font:12.25px/1 'Liberation Mono',monospace;color:#8a8a8a;white-space:pre;transform:scaleY(1.301);transform-origin:0 50%;">)</div>
<div style="left:971.45px;top:1020.38px;font:12.25px/1 'Liberation Mono',monospace;color:#8a8a8a;white-space:pre;transform:scaleY(1.301);transform-origin:0 50%;">,</div>
<div style="left:941px;top:1024.5px;width:30.5px;height:1.3px;background:#8f8f8f;"></div>
<div style="left:980px;top:1024.5px;width:30.5px;height:1.3px;background:#8f8f8f;"></div>
<div style="left:1039.03px;top:1019.88px;font:12.25px/1 'Liberation Mono',monospace;color:#8a8a8a;white-space:pre;transform:scaleY(1.301);transform-origin:0 50%;">Bayer:</div>
<div style="left:1088px;top:1024.5px;width:29.5px;height:1.3px;background:#8f8f8f;"></div>
<div style="left:1132.68px;top:1019.88px;font:bold 12.25px/1 'Liberation Mono',monospace;color:#666;white-space:pre;transform:scaleY(1.301);transform-origin:0 50%;">R</div>
<div style="left:811px;top:1016.3px;width:107px;height:1px;background:#d4d4d4;"></div>
<div style="left:922px;top:1016.3px;width:110px;height:1px;background:#d4d4d4;"></div>
<div style="left:1036px;top:1016.3px;width:108px;height:1px;background:#d4d4d4;"></div>
<div style="left:920.5px;top:1016px;width:1px;height:16px;background:#cfcfcf;"></div>
<div style="left:1034.5px;top:1016px;width:1px;height:16px;background:#cfcfcf;"></div>
<div style="left:1414.500px;top:839.500px;width:65px;height:65px;border-radius:50%;background:#f3f5f8;box-shadow:0 0 3px rgba(150,170,200,.5)"></div>
<div style="left:1417.500px;top:842.500px;width:59px;height:59px;border-radius:50%;background:linear-gradient(170deg,#2c82ee 10%,#2a98f4 60%,#44b4f6);overflow:hidden"><div style="left:-3px;top:38px;width:64px;height:30px;border-radius:50%;background:rgba(90,200,250,.35)"></div></div>
<svg style="left:1450px;top:846px" width="16" height="14" viewBox="0 0 16 14" fill="none" stroke="#8fc8f8" stroke-width="1.300"><path d="M1 2 C6 3 10 6 13 11"/></svg>
<div style="left:1417.500px;top:842.500px;width:59px;height:59px;border-radius:50%;overflow:hidden">
<div style="left:1.04px;top:21.95px;font:17.2px/1 'Liberation Sans',sans-serif;color:#dcecfd;white-space:pre;font-kerning:none;letter-spacing:0.459px;text-shadow:0 0 0.600px #dcecfd;">398:48</div>
</div>
<div style="left:1144px;top:926.5px;width:494px;height:106px;background:#252525;"></div>
<div style="left:1598px;top:926.5px;width:40px;height:106px;background:#2e2e2e;"></div>
<svg style="left:1166px;top:947.500px" width="18" height="18" viewBox="0 0 18 18" fill="none" stroke="#d8d8d8" stroke-width="1.300"><circle cx="9" cy="5.500" r="3.600"/><path d="M2 17 C2 11.500 5 10 9 10 C13 10 16 11.500 16 17"/></svg>
<div style="left:1190.22px;top:949.05px;font:16.8px/1 'Liberation Sans',sans-serif;color:#efefef;white-space:pre;font-kerning:none;letter-spacing:0.024px;">17...23</div>
<svg width="99.6" height="19.9" viewBox="0 0 6000 1200" fill="#efefef" style="left:1242.7px;top:948.4px;opacity:1.0"><text class="sans" x="0" y="880">正在远程本机</text></svg>
<svg style="left:1160px;top:975px" width="350" height="44" viewBox="0 0 350 44" fill="none" stroke="#e2ded4" stroke-width="1.600" stroke-linejoin="round" stroke-linecap="round"><path d="M7 10.500 H37 V30 H19 L13.500 35 V30 H7 Z"/><circle cx="15.500" cy="20.500" r="1" fill="#e2ded4"/><circle cx="22" cy="20.500" r="1" fill="#e2ded4"/><circle cx="28.500" cy="20.500" r="1" fill="#e2ded4"/><rect x="79" y="8.500" width="10.500" height="19.500" rx="5.200"/><path d="M73 19.500 C73 35 95.500 35 95.500 19.500 M84.200 31 V35.500 M78.500 35.800 H90"/><rect x="133" y="13" width="25" height="18" rx="2"/><path d="M138 18 H153 M138 22 H147 M145 13 C145 9 148 10 148 7"/><rect x="150.500" y="20" width="11" height="15.500" rx="5.500" fill="#252525"/><path d="M156 20 V26"/><rect x="197" y="9.500" width="25.500" height="25.500"/><path d="M204.500 17.500 H215 M209.750 17.500 V28" stroke-width="2"/><path d="M258 9.500 H267.500 L271.500 14.500 H286 V35 H258 Z"/><path d="M262 25 H279 M273 19 L279 25 L273 31"/><circle cx="326.500" cy="22.200" r="13.700"/><path d="M321.500 17.200 L331.500 27.200 M331.500 17.200 L321.500 27.200"/></svg>
<svg style="left:1607px;top:970.500px" width="20" height="20" viewBox="0 0 20 20" fill="none" stroke="#fff" stroke-width="1.900"><path d="M3 3 L10 10 L3 17 M10.500 3 L17.500 10 L10.500 17"/></svg>
<div style="left:0;top:583px;width:810px;height:449px;background:#fff;border-radius:0 9px 0 0;overflow:hidden;box-shadow:0 0 3px rgba(0,0,0,.25)">
<div style="left:0px;top:0px;width:810px;height:49px;background:#fff;"></div>
<div style="left:325.26px;top:17.11px;font:16.3px/1 'Liberation Sans',sans-serif;color:#1e1e1e;white-space:pre;font-kerning:none;letter-spacing:-0.071px;">PC-Gentec-EO</div>
<svg style="left:640px;top:7px" width="160" height="22" viewBox="0 0 160 22" fill="none" stroke="#1e1e1e" stroke-width="1.400"><path d="M13 10.500 H26.500"/><rect x="73" y="4.500" width="12" height="12" rx="1"/><path d="M134 4 L146 16 M146 4 L134 16"/></svg>
<div style="left:0px;top:48.5px;width:810px;height:29px;background:linear-gradient(#d3d7e2,#dde1e9);"></div>
<div style="left:60.4px;top:50.60000000000002px;width:111.5px;height:27px;background:linear-gradient(#eff2f6,#e8ecf2);"></div>
<div style="left:67.62px;top:56.56px;font:14.4px/1 'Liberation Sans',sans-serif;color:#5a5a5a;white-space:pre;font-kerning:none;letter-spacing:-0.132px;">PC-Gentec-EO</div>
<div style="left:0px;top:77px;width:810px;height:110px;background:#e6e9ef;"></div>
<div style="left:0px;top:79px;width:640px;height:87px;background:linear-gradient(#eceff4,#e3e6ec 50%,#dfe2e9 52%,#e7eaf0);"></div>
<div style="left:0px;top:165.70000000000005px;width:640px;height:20.5px;background:linear-gradient(#d9dce4,#e1e4ea);"></div>
<div style="left:640px;top:78px;width:170px;height:108px;background:linear-gradient(#f2f4f7,#e6e9ee 60%,#e9ebf0);"></div>
<div style="left:157px;top:80px;width:1.2px;height:105px;background:#bcc0c8;"></div>
<div style="left:158.5px;top:80px;width:1.5px;height:105px;background:#f3f5f8;"></div>
<div style="left:441px;top:80px;width:1.2px;height:105px;background:#bcc0c8;"></div>
<div style="left:442.5px;top:80px;width:1.5px;height:105px;background:#f3f5f8;"></div>
<div style="left:588px;top:80px;width:1.2px;height:105px;background:#bcc0c8;"></div>
<div style="left:589.5px;top:80px;width:1.5px;height:105px;background:#f3f5f8;"></div>
<div style="left:637.5px;top:80px;width:1.2px;height:105px;background:#bcc0c8;"></div>
<div style="left:639.0px;top:80px;width:1.5px;height:105px;background:#f3f5f8;"></div>
<div style="left:0px;top:185.5px;width:810px;height:1.5px;background:#c2c6ce;"></div>
<div style="left:2.2px;top:4.7999999999999545px;width:49.2px;height:47.200px;border-radius:50%;box-sizing:border-box;border:1.200px solid #9a9696;background:radial-gradient(circle at 50% 28%,#fcfcfc 0,#ececec 45%,#d6d6d6 78%,#e9e9e9 100%)"></div>
<div style="left:12px;top:14.5px;width:30.500px;height:28.500px;background:linear-gradient(#d2cdc8,#bdb8b4)"></div>
<div style="left:14.200px;top:17px;width:26.500px;height:24.500px;background:linear-gradient(#2c8eb4,#14648c 50%,#0a4668)"></div>
<svg style="left:14.200px;top:17px" width="26.500" height="24.500" viewBox="0 0 26.500 24.500" fill="none"><path d="M2 11.500 C6 10 8 13 10 11 M16 10 C19 8 22 11 25 9" stroke="#4ab0d4" stroke-width="1.800" opacity=".8"/><path d="M8.500 5 C9.500 9 9 15 9.500 22 M14.500 3 C13.500 8 15.500 14 15 21 M9.500 14 C11.500 12 13.500 12 15 13" stroke="#8fd6ee" stroke-width="2.400" stroke-linecap="round"/><circle cx="8.300" cy="7.500" r="1.700" fill="#c4f0fc"/><circle cx="14.300" cy="4.500" r="1.700" fill="#c4f0fc"/></svg>
<div style="left:68.6px;top:21.299999999999955px;width:6.8px;height:1.8px;background:#555;"></div>
<svg style="left:68.600px;top:24px" width="6.800" height="4.500" viewBox="0 0 7 5" fill="#555"><path d="M0 0 H7 Q7 4.500 3.500 5 Q0 4.500 0 0 Z"/></svg>
<div style="left:32.06px;top:168.66px;font:14.6px/1 'Liberation Sans',sans-serif;color:#606060;white-space:pre;font-kerning:none;letter-spacing:-0.557px;">CONNECTION</div>
<div style="left:263.76px;top:168.66px;font:14.6px/1 'Liberation Sans',sans-serif;color:#606060;white-space:pre;font-kerning:none;letter-spacing:-1.030px;">CONTROLS</div>
<div style="left:458.34px;top:168.66px;font:14.6px/1 'Liberation Sans',sans-serif;color:#606060;white-space:pre;font-kerning:none;letter-spacing:-1.032px;">STARTUP CONFIG</div>
<div style="left:597.80px;top:168.66px;font:14.6px/1 'Liberation Sans',sans-serif;color:#606060;white-space:pre;font-kerning:none;letter-spacing:-1.391px;">HELP</div>
<div style="left:4.44px;top:128.36px;font:14.2px/1 'Liberation Sans',sans-serif;color:#5e5e5e;white-space:pre;font-kerning:none;letter-spacing:-0.412px;">MAESTRO</div>
<div style="left:3.68px;top:148.46px;font:14.2px/1 'Liberation Sans',sans-serif;color:#5e5e5e;white-space:pre;font-kerning:none;letter-spacing:0.444px;">Connected</div>
<div style="left:78.84px;top:128.36px;font:14.2px/1 'Liberation Sans',sans-serif;color:#5e5e5e;white-space:pre;font-kerning:none;letter-spacing:0.336px;">Disconnect</div>
<div style="left:165.68px;top:128.36px;font:14.2px/1 'Liberation Sans',sans-serif;color:#a2a5ab;white-space:pre;font-kerning:none;letter-spacing:0.330px;">Turbo</div>
<div style="left:218.55px;top:128.36px;font:14.2px/1 'Liberation Sans',sans-serif;color:#5e5e5e;white-space:pre;font-kerning:none;letter-spacing:0.283px;">Zero</div>
<div style="left:288.86px;top:128.36px;font:14.2px/1 'Liberation Sans',sans-serif;color:#5e5e5e;white-space:pre;font-kerning:none;letter-spacing:0.410px;">Stop</div>
<div style="left:258.97px;top:148.46px;font:14.2px/1 'Liberation Sans',sans-serif;color:#5e5e5e;white-space:pre;font-kerning:none;letter-spacing:0.715px;">Acquistion</div>
<div style="left:382.26px;top:128.36px;font:14.2px/1 'Liberation Sans',sans-serif;color:#5e5e5e;white-space:pre;font-kerning:none;letter-spacing:-0.110px;">Start</div>
<div style="left:355.66px;top:148.46px;font:14.2px/1 'Liberation Sans',sans-serif;color:#5e5e5e;white-space:pre;font-kerning:none;letter-spacing:0.194px;">Statistics</div>
<div style="left:460.36px;top:128.36px;font:14.2px/1 'Liberation Sans',sans-serif;color:#5e5e5e;white-space:pre;font-kerning:none;letter-spacing:-0.697px;">Save</div>
<div style="left:526.34px;top:128.36px;font:14.2px/1 'Liberation Sans',sans-serif;color:#5e5e5e;white-space:pre;font-kerning:none;letter-spacing:0.564px;">Load</div>
<div style="left:448.36px;top:148.46px;font:14.2px/1 'Liberation Sans',sans-serif;color:#5e5e5e;white-space:pre;font-kerning:none;letter-spacing:0.225px;">Settings Settings</div>
<div style="left:594.97px;top:128.36px;font:14.2px/1 'Liberation Sans',sans-serif;color:#5e5e5e;white-space:pre;font-kerning:none;letter-spacing:0.506px;">About</div>
<svg style="left:115px;top:150px" width="11.5" height="5.800" viewBox="0 0 10 6" preserveAspectRatio="none" fill="#6a6a6a"><path d="M0 0 H10 L5 6 Z"/></svg>
<svg style="left:232.7px;top:150px" width="11.300000000000011" height="5.800" viewBox="0 0 10 6" preserveAspectRatio="none" fill="#6a6a6a"><path d="M0 0 H10 L5 6 Z"/></svg>
<svg style="left:336.5px;top:150px" width="10.0" height="5.800" viewBox="0 0 10 6" preserveAspectRatio="none" fill="#6a6a6a"><path d="M0 0 H10 L5 6 Z"/></svg>
<svg style="left:421.7px;top:150px" width="10.699999999999989" height="5.800" viewBox="0 0 10 6" preserveAspectRatio="none" fill="#6a6a6a"><path d="M0 0 H10 L5 6 Z"/></svg>
<svg style="left:566px;top:150px" width="10" height="5.800" viewBox="0 0 10 6" preserveAspectRatio="none" fill="#6a6a6a"><path d="M0 0 H10 L5 6 Z"/></svg>
<div style="left:19px;top:81px;width:41.400px;height:38px;border-radius:44% 44% 50% 50% / 40% 40% 60% 60%;background:linear-gradient(#6ecb5a 0,#48b438 30%,#3aa42c 52%,#52b634 70%,#98d84c 100%)"></div>
<svg style="left:92px;top:78px" width="46" height="44" viewBox="0 0 46 44"><path d="M6 2 C14 -1 20 3 22 9 L17 14 C22 19 28 26 33 30 L39 27 C45 30 46 37 42 41 C30 42 12 22 4 6 Z" fill="#1c1c1c"/><path d="M3 42 L4.500 24 L10 29.500 L19 20 L25 26 L15.500 35.500 L21 41 Z" fill="#f0302a"/><path d="M10 29.500 L19 20 L21 22 L12 31.500 Z" fill="#f8807a"/></svg>
<svg style="left:163px;top:80px" width="45" height="41" viewBox="0 0 45 41" fill="none"><circle cx="23.500" cy="20.500" r="16.300" stroke="#7c7e82" stroke-width="4.200"/><rect x="0" y="10" width="12" height="12" fill="#e6e9ef"/><path d="M0.500 14.500 L13.500 14 L7.500 25 Z" fill="#7c7e82"/><circle cx="23.500" cy="20.500" r="8.500" fill="#c4dcf2"/><path d="M23.500 21 L23.500 13 M23.500 21 L19 26 M23.500 21 L28 26" stroke="#8cbce6" stroke-width="2"/><path d="M23.500 6.500 V9 M23.500 32 V34.500 M9.500 20.500 H12 M35 20.500 H37.500" stroke="#9a9ca0" stroke-width="1.200"/></svg>
<svg style="left:221.500px;top:79px" width="26.500" height="42" viewBox="0 0 26.500 42" fill="none"><rect x="3.200" y="3" width="20" height="36" rx="10" stroke="#1c74bc" stroke-width="4.200"/><rect x="3.200" y="3" width="20" height="36" rx="10" stroke="#c8e0f4" stroke-width="1.200" transform="translate(-1.200,-0.500)"/><rect x="9.700" y="9" width="7" height="22" rx="3.500" stroke="#2a8ad4" stroke-width="3"/></svg>
<div style="left:285px;top:81px;width:41.300px;height:38px;background:linear-gradient(135deg,#f4a234 0,#f2703c 30%,#ea3050 62%,#e8184a 100%);border-radius:1.500px;box-shadow:inset -3px -3px 4px rgba(200,10,50,.55)"></div>
<svg style="left:378.400px;top:80px" width="38.500" height="40" viewBox="0 0 38.500 40"><defs><linearGradient id="gp" x1="0" y1="0" x2="1" y2="0.300"><stop offset="0" stop-color="#2d9a28"/><stop offset="0.600" stop-color="#4cb838"/><stop offset="1" stop-color="#8adc50"/></linearGradient></defs><path d="M1 2 Q1 0 3 1 L37 17 Q39 19 37 21 L3 39 Q1 40 1 38 Z" fill="url(#gp)"/></svg>
<svg style="left:458px;top:83px" width="40" height="38" viewBox="0 0 40 38"><path d="M6 31 L28 8" stroke="#c9ccd4" stroke-width="6.500" stroke-linecap="round"/><circle cx="6" cy="31" r="5.500" fill="#cfd2d9"/><circle cx="6" cy="31" r="2" fill="#85888f"/><path d="M29 2 A6.500 6.500 0 1 0 36.500 10" stroke="#d2d6dc" stroke-width="4.500" fill="none"/><path d="M7 5 L16 14" stroke="#dfe2e7" stroke-width="7" stroke-linecap="round"/><path d="M21 20 L34 33" stroke="#7e8086" stroke-width="8.500" stroke-linecap="butt"/><path d="M23.500 18.500 L36.500 31.500" stroke="#c8cad0" stroke-width="2.500"/><g transform="translate(7,4)"><path d="M6.500 0 H17.500 V9 H23 L12 20 L1 9 H6.500 Z" fill="#28a0e8"/></g></svg>
<svg style="left:526.5px;top:83px" width="40" height="38" viewBox="0 0 40 38"><path d="M6 31 L28 8" stroke="#c9ccd4" stroke-width="6.500" stroke-linecap="round"/><circle cx="6" cy="31" r="5.500" fill="#cfd2d9"/><circle cx="6" cy="31" r="2" fill="#85888f"/><path d="M29 2 A6.500 6.500 0 1 0 36.500 10" stroke="#d2d6dc" stroke-width="4.500" fill="none"/><path d="M7 5 L16 14" stroke="#dfe2e7" stroke-width="7" stroke-linecap="round"/><path d="M21 20 L34 33" stroke="#7e8086" stroke-width="8.500" stroke-linecap="butt"/><path d="M23.500 18.500 L36.500 31.500" stroke="#c8cad0" stroke-width="2.500"/><g transform="translate(7,4)"><path d="M12 0 L23 11 H17.500 V20 H6.500 V11 H1 Z" fill="#28a0e8"/></g></svg>
<div style="left:596px;top:81px;width:38px;height:37.700px;border-radius:50%;background:radial-gradient(circle at 50% 28%,#3abcf2,#1496dc 60%,#0c7cc4)"></div>
<div style="left:608.51px;top:82.14px;font:bold 36px/1 'Liberation Serif',serif;color:#f6f2dc;white-space:pre;font-kerning:none;">i</div>
<div style="left:0px;top:187px;width:810px;height:33.5px;background:linear-gradient(#dfe3ec 0,#eef1f7 35%,#e6eaf2 70%,#d6dae4 100%);"></div>
<div style="left:1.09px;top:199.46px;font:bold 14.2px/1 'Liberation Sans',sans-serif;color:#3e4048;white-space:pre;font-kerning:none;letter-spacing:-0.305px;">Scope</div>
<div style="left:0px;top:220.5px;width:738px;height:229px;background:#d4d8e1;"></div>
<div style="left:0px;top:220.5px;width:732.5px;height:221.5px;background:#03101b;"></div>
<div style="left:0px;top:220.5px;width:1.5px;height:221.5px;background:#5c6874;"></div>
<div style="left:0.13px;top:222.27px;font:bold 9.4px/1 'Liberation Sans',sans-serif;color:#cfcfcf;white-space:pre;font-kerning:none;letter-spacing:0.574px;">00_P12-35-H2-00</div>
<div style="left:287.67px;top:240.90px;font:36.8px/1 'Liberation Sans',sans-serif;color:#fff;white-space:pre;font-kerning:none;letter-spacing:1.252px;">96.5 mW</div>
<svg style="left:0;top:220px" width="733" height="222" viewBox="0 803 733 222" fill="none"><rect x="77.4" y="879.7" width="607.1" height="124.3" stroke="#79848c" stroke-width="1.400"/><path d="M77.4 904.6 H684.5" stroke="#55616a" stroke-width="1" stroke-dasharray="2 1.500"/><path d="M198.8 879.7 V1004.0" stroke="#55616a" stroke-width="1" stroke-dasharray="2 1.500"/><path d="M77.4 929.4 H684.5" stroke="#55616a" stroke-width="1" stroke-dasharray="2 1.500"/><path d="M320.2 879.7 V1004.0" stroke="#55616a" stroke-width="1" stroke-dasharray="2 1.500"/><path d="M77.4 954.3 H684.5" stroke="#55616a" stroke-width="1" stroke-dasharray="2 1.500"/><path d="M441.7 879.7 V1004.0" stroke="#55616a" stroke-width="1" stroke-dasharray="2 1.500"/><path d="M77.4 979.1 H684.5" stroke="#55616a" stroke-width="1" stroke-dasharray="2 1.500"/><path d="M563.1 879.7 V1004.0" stroke="#55616a" stroke-width="1" stroke-dasharray="2 1.500"/><path d="M77.4 999.7 L81.2 958 L83.8 949 L86.5 972 L88.9 1002 L91.9 973 L96.5 940 L100.3 955 L104.8 928.7 L109.2 941.4 L113.5 964 L118 952.8 L120.5 925 L123.1 902 L126.9 927.4 L130.7 947.7 L135.8 966.7 L139 950 L142.7 935 L146 973 L149 955 L152.3 940 L156.1 924.9 L159 945 L162.5 964 L165.5 950 L168.8 937.6 L172 920 L175.2 910.9 L178 940 L180.8 964 L183.5 935 L186.6 912 L189 940 L192 948 L195 930 L197.5 914.7 L200.6 927.4 L206 928.5 L212 928.7 L217 928.7 L218.8 908 L220.5 915 L222 947.7 L224.7 964 L227.3 957.9 L230.5 975.6 L233.6 949 L237 935 L239.9 922 L242.4 932 L246.3 916 L250 926 L253.9 908 L257.7 900.7 L259.5 915 L261.5 912 L265.3 945 L269 952.8 L274.2 937.6 L279.3 937.6 L280.5 958 L284.3 978 L286 968 L288 980.7 L292 947.7 L295.8 978 L299.5 955 L303.4 935 L308.4 942.6 L312.3 932.5 L317.3 922 L320 930 L323.7 914.7 L327 926 L330 928.7 L333.5 928 L337.6 955.3 L341.5 889 L346.5 894.4 L351.6 904.6 L355.4 927.4 L359 912 L363 897 L366.8 919.8 L370.7 937.6 L375.7 928.7 L380 928.5 L384.6 928.7 L385.9 947.7 L389 938 L392.2 935 L397.3 937.6 L401 956.6 L405 944 L408 962 L411.5 982.8 L415 975 L418 998 L421 975 L424.4 954.6 L428.2 947 L433.3 954.6 L436 970 L438.5 982.8 L442.3 990.5 L447.4 990.5 L452 968 L456.4 947 L461.5 972.6 L465.4 954.6 L471 948 L477 936.7 L481 965 L484.6 993 L488.5 965 L492.3 939.2 L497.4 964.9 L502.6 934 L506.5 955 L510.3 975 L513.5 985 L516.7 998 L521 988 L525.6 980 L528.2 947 L530.8 927.7 L533.5 942 L535.9 939.2 L539 928 L542.3 906 L545 928 L547.4 923.8 L551 905 L555 884 L557.5 915 L560.3 906 L563.5 930 L566.7 953.3 L569.5 915 L572.3 882.8 L575.3 915 L578.2 906 L580 935 L582 959.7 L585.9 952 L589.7 947 L594 953 L598.7 947 L602.6 954.6 L607 950 L612.8 959.7 L616.7 977.7 L620 955 L623 936.7 L627.5 965 L632 990.5 L635.9 957 L638.5 975 L641 972.6 L644 975 L647.4 986.7 L652 978 L656.4 972.6 L660 950 L664 927.7 L667 940 L670.5 941.8 L673 928 L675.6 916 L678.2 936.7 L681 936.7 L684.6 936.7" stroke="#0d4f7e" stroke-width="3" stroke-linejoin="round" opacity=".7"/><path d="M77.4 999.7 L81.2 958 L83.8 949 L86.5 972 L88.9 1002 L91.9 973 L96.5 940 L100.3 955 L104.8 928.7 L109.2 941.4 L113.5 964 L118 952.8 L120.5 925 L123.1 902 L126.9 927.4 L130.7 947.7 L135.8 966.7 L139 950 L142.7 935 L146 973 L149 955 L152.3 940 L156.1 924.9 L159 945 L162.5 964 L165.5 950 L168.8 937.6 L172 920 L175.2 910.9 L178 940 L180.8 964 L183.5 935 L186.6 912 L189 940 L192 948 L195 930 L197.5 914.7 L200.6 927.4 L206 928.5 L212 928.7 L217 928.7 L218.8 908 L220.5 915 L222 947.7 L224.7 964 L227.3 957.9 L230.5 975.6 L233.6 949 L237 935 L239.9 922 L242.4 932 L246.3 916 L250 926 L253.9 908 L257.7 900.7 L259.5 915 L261.5 912 L265.3 945 L269 952.8 L274.2 937.6 L279.3 937.6 L280.5 958 L284.3 978 L286 968 L288 980.7 L292 947.7 L295.8 978 L299.5 955 L303.4 935 L308.4 942.6 L312.3 932.5 L317.3 922 L320 930 L323.7 914.7 L327 926 L330 928.7 L333.5 928 L337.6 955.3 L341.5 889 L346.5 894.4 L351.6 904.6 L355.4 927.4 L359 912 L363 897 L366.8 919.8 L370.7 937.6 L375.7 928.7 L380 928.5 L384.6 928.7 L385.9 947.7 L389 938 L392.2 935 L397.3 937.6 L401 956.6 L405 944 L408 962 L411.5 982.8 L415 975 L418 998 L421 975 L424.4 954.6 L428.2 947 L433.3 954.6 L436 970 L438.5 982.8 L442.3 990.5 L447.4 990.5 L452 968 L456.4 947 L461.5 972.6 L465.4 954.6 L471 948 L477 936.7 L481 965 L484.6 993 L488.5 965 L492.3 939.2 L497.4 964.9 L502.6 934 L506.5 955 L510.3 975 L513.5 985 L516.7 998 L521 988 L525.6 980 L528.2 947 L530.8 927.7 L533.5 942 L535.9 939.2 L539 928 L542.3 906 L545 928 L547.4 923.8 L551 905 L555 884 L557.5 915 L560.3 906 L563.5 930 L566.7 953.3 L569.5 915 L572.3 882.8 L575.3 915 L578.2 906 L580 935 L582 959.7 L585.9 952 L589.7 947 L594 953 L598.7 947 L602.6 954.6 L607 950 L612.8 959.7 L616.7 977.7 L620 955 L623 936.7 L627.5 965 L632 990.5 L635.9 957 L638.5 975 L641 972.6 L644 975 L647.4 986.7 L652 978 L656.4 972.6 L660 950 L664 927.7 L667 940 L670.5 941.8 L673 928 L675.6 916 L678.2 936.7 L681 936.7 L684.6 936.7" stroke="#2089d0" stroke-width="1.300" stroke-linejoin="round"/></svg>
<div style="left:26.34px;top:293.12px;font:bold 10.3px/1 'Liberation Sans',sans-serif;color:#c8c8c0;white-space:pre;font-kerning:none;letter-spacing:0.150px;">96.81 mW</div>
<div style="left:26.34px;top:317.98px;font:bold 10.3px/1 'Liberation Sans',sans-serif;color:#c8c8c0;white-space:pre;font-kerning:none;letter-spacing:0.150px;">96.63 mW</div>
<div style="left:26.34px;top:342.84px;font:bold 10.3px/1 'Liberation Sans',sans-serif;color:#c8c8c0;white-space:pre;font-kerning:none;letter-spacing:0.150px;">96.44 mW</div>
<div style="left:26.34px;top:367.70px;font:bold 10.3px/1 'Liberation Sans',sans-serif;color:#c8c8c0;white-space:pre;font-kerning:none;letter-spacing:0.150px;">96.26 mW</div>
<div style="left:26.34px;top:392.56px;font:bold 10.3px/1 'Liberation Sans',sans-serif;color:#c8c8c0;white-space:pre;font-kerning:none;letter-spacing:0.150px;">96.08 mW</div>
<div style="left:26.34px;top:417.42px;font:bold 10.3px/1 'Liberation Sans',sans-serif;color:#c8c8c0;white-space:pre;font-kerning:none;letter-spacing:0.150px;">95.90 mW</div>
<div style="left:51.07px;top:427.47px;font:bold 10.8px/1 'Liberation Sans',sans-serif;color:#c6c6be;white-space:pre;font-kerning:none;letter-spacing:-0.212px;">5544.9 sec</div>
<div style="left:172.49px;top:427.47px;font:bold 10.8px/1 'Liberation Sans',sans-serif;color:#c6c6be;white-space:pre;font-kerning:none;letter-spacing:-0.212px;">5664.9 sec</div>
<div style="left:293.91px;top:427.47px;font:bold 10.8px/1 'Liberation Sans',sans-serif;color:#c6c6be;white-space:pre;font-kerning:none;letter-spacing:-0.212px;">5784.9 sec</div>
<div style="left:415.33px;top:427.47px;font:bold 10.8px/1 'Liberation Sans',sans-serif;color:#c6c6be;white-space:pre;font-kerning:none;letter-spacing:-0.212px;">5904.9 sec</div>
<div style="left:536.68px;top:427.47px;font:bold 10.8px/1 'Liberation Sans',sans-serif;color:#c6c6be;white-space:pre;font-kerning:none;letter-spacing:-0.205px;">6024.9 sec</div>
<div style="left:658.10px;top:427.47px;font:bold 10.8px/1 'Liberation Sans',sans-serif;color:#c6c6be;white-space:pre;font-kerning:none;letter-spacing:-0.205px;">6144.9 sec</div>
<div style="left:632.2px;top:222px;width:18px;height:17.5px;background:linear-gradient(#f2f2f2,#fcfcfc);"></div>
<div style="left:632.2px;top:222px;width:5.8px;height:17.5px;background:#566774;"></div>
<div style="left:632.2px;top:239.5px;width:18px;height:16px;background:linear-gradient(#b4b4b4,#7c7c7c);"></div>
<div style="left:650.5px;top:222px;width:2px;height:33.5px;background:#8594a0;"></div>
<div style="left:654px;top:222px;width:3px;height:33.5px;background:#6c8391;"></div>
<div style="left:657px;top:222px;width:26px;height:33.5px;background:linear-gradient(#4c6a7a,#1c3a4c 55%,#0a2030);"></div>
<svg style="left:655px;top:221px" width="34" height="34" viewBox="-17 -16 34 34"><g fill="#f0f0f0"><circle r="10"/><rect x="-3.200" y="-14.600" width="6.400" height="8" transform="rotate(0)"/><rect x="-3.200" y="-14.600" width="6.400" height="8" transform="rotate(45)"/><rect x="-3.200" y="-14.600" width="6.400" height="8" transform="rotate(90)"/><rect x="-3.200" y="-14.600" width="6.400" height="8" transform="rotate(135)"/><rect x="-3.200" y="-14.600" width="6.400" height="8" transform="rotate(180)"/><rect x="-3.200" y="-14.600" width="6.400" height="8" transform="rotate(225)"/><rect x="-3.200" y="-14.600" width="6.400" height="8" transform="rotate(270)"/><rect x="-3.200" y="-14.600" width="6.400" height="8" transform="rotate(315)"/></g><circle cx="5.500" cy="-3.700" r="4.400" fill="#555"/></svg>
<div style="left:683px;top:222px;width:6.6px;height:33.5px;background:linear-gradient(90deg,#8ea2ae,#5c7482 40%,#9cb0ba);"></div>
<svg style="left:693px;top:220px" width="40" height="38" viewBox="-20 -19 40 38" fill="none"><defs><linearGradient id="gc" x1="0" y1="0" x2="0" y2="1"><stop offset="0" stop-color="#0c4c6a"/><stop offset="1" stop-color="#051e2c"/></linearGradient></defs><circle cx="1" cy="0.400" r="16" fill="url(#gc)"/><path d="M-5.500 -16 A17 17 0 0 0 -3 17" stroke="#fff" stroke-width="3.800"/><path d="M7 -15.800 A17 17 0 0 1 8 16" stroke="#fff" stroke-width="3.800"/></svg>
<div style="left:732.5px;top:187px;width:77.5px;height:262px;background:#e5e8ee;"></div>
<div style="left:732.5px;top:187px;width:5px;height:34px;background:#f2f4f7;"></div>
<div style="left:736px;top:190px;width:74px;height:27px;background:linear-gradient(#d9dde5,#e6e9ee 45%,#eff1f5);"></div>
<div style="left:736px;top:190px;width:1.5px;height:30px;background:#bfc3cb;"></div>
<div style="left:736px;top:190px;width:74px;height:1px;background:#bcc0c8;"></div>
<svg style="left:737px;top:191.5px" width="73" height="26" viewBox="0 0 73 26"><path d="M21 26 L51 1.500 V26 Z" fill="#14b0f2"/><path d="M12.500 7 V18 L7 12.500 Z" fill="#70747c"/><path d="M57 7 V18 L63 12.500 Z" fill="#d8e2ee" stroke="#a4aeba" stroke-width="1"/></svg>
<div style="left:738.6px;top:216.5px;width:71.4px;height:233px;background:#1fa8f3;"></div>
<div style="left:742.5px;top:220.5px;width:62.5px;height:229px;background:#e3e7ed;"></div>
<div style="left:783px;top:220.5px;width:22px;height:229px;background:#f0f1f4;"></div>
<div style="left:788.6px;top:242px;width:12.1px;height:22px;background:#8b8b8f;"></div>
<div style="left:760.4px;top:243.39999999999998px;width:23px;height:79px;border:1px solid #a9b1bd;border-right:none;box-sizing:border-box;"></div>
<div style="left:775px;top:242px;width:8px;height:14px;background:#fafbfc;"></div>
<div style="left:778px;top:285px;width:5px;height:17px;background:#f5f6f8;border-radius:5px 0 0 5px"></div>
<div style="left:760.4px;top:355.6px;width:23px;height:94px;border:1px solid #a9b1bd;border-right:none;border-bottom:none;box-sizing:border-box;"></div>
<div style="left:765.5px;top:348px;width:17.5px;height:15px;background:#e3e7ed;"></div>
<div style="left:766.73px;top:348.21px;font:15.5px/1 'Liberation Sans',sans-serif;color:#3c79af;white-space:pre;font-kerning:none;">Fi</div>
<div style="left:783px;top:347px;width:22px;height:20px;background:#f0f1f4;"></div>
<div style="left:0px;top:442px;width:738px;height:7px;background:#cfd3db;"></div>
</div>
</div>
</body></html>
